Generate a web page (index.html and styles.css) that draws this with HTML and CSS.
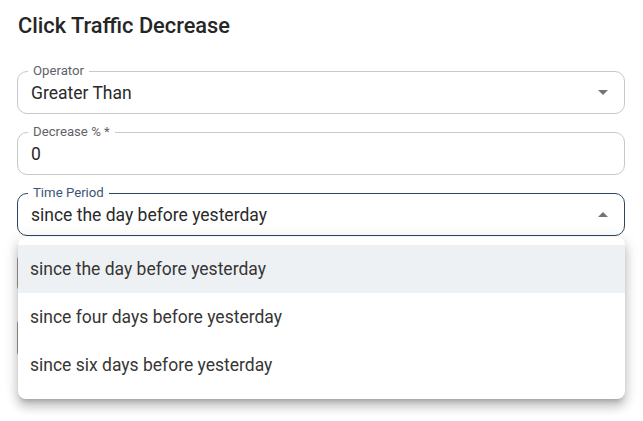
FILE: index.html
```html
<!DOCTYPE html>
<html>
<head>
<meta charset="utf-8">
<link rel="stylesheet" href="styles.css">
</head>
<body>
<div class="panel">
  <h1 class="title">Click Traffic Decrease</h1>
  <div class="form">
    <div class="field">
      <span class="label">Operator</span>
      <span class="value">Greater Than</span>
      <svg class="arrow" width="10" height="5" viewBox="0 0 10 5"><path d="M0 0L5 5L10 0Z" fill="#757575"/></svg>
    </div>
    <div class="field">
      <span class="label">Decrease % *</span>
      <span class="value">0</span>
    </div>
    <div class="field-wrap">
      <div class="field focused">
        <span class="label">Time Period</span>
        <span class="value">since the day before yesterday</span>
        <svg class="arrow" width="10" height="5" viewBox="0 0 10 5"><path d="M0 5L5 0L10 5Z" fill="#757575"/></svg>
      </div>
      <div class="under">
        <div class="under-field"></div>
        <div class="under-btn"></div>
      </div>
      <ul class="menu">
        <li class="item active">since the day before yesterday</li>
        <li class="item">since four days before yesterday</li>
        <li class="item">since six days before yesterday</li>
      </ul>
    </div>
  </div>
</div>
</body>
</html>
```
FILE: styles.css
```css
* { box-sizing: border-box; }
html, body { margin: 0; padding: 0; background: #ffffff; min-height: 421px; }
body {
  font-family: Roboto, "Liberation Sans", sans-serif;
  color: #212121;
}
.panel {
  padding: 12px 18px 0 17px;
  width: 643px;
  min-height: 421px;
}
.title {
  margin: 0 0 0 1px;
  font-size: 21.8px;
  font-weight: 500;
  line-height: 28px;
  color: #262626;
}
.form {
  display: flex;
  flex-direction: column;
  gap: 18px;
  margin-top: 31px;
}
.field {
  position: relative;
  height: 43px;
  border: 1px solid #c8c8c8;
  border-radius: 10px;
  display: flex;
  align-items: center;
  padding: 0 13px;
}
.field.focused {
  border-color: #2c4763;
}
.label {
  position: absolute;
  top: -9px;
  left: 10px;
  padding: 0 5px;
  background: #ffffff;
  font-size: 13.2px;
  line-height: 15px;
  color: #5f6368;
}
.focused .label { color: #3b5576; }
.value {
  font-size: 17.5px;
  line-height: 20px;
  color: #2a2a2a;
  margin-top: 1px;
}
.arrow {
  position: absolute;
  right: 16px;
  top: 18px;
}
.field-wrap {
  position: relative;
}
.under {
  display: flex;
  flex-direction: column;
  gap: 26px;
  margin-top: 18px;
}
.under-field {
  height: 38px;
  border: 1px solid #9a9a9a;
  border-radius: 6px;
}
.under-btn {
  height: 40px;
  border: 1px solid #9a9a9a;
  border-radius: 6px;
}
.menu {
  position: absolute;
  left: 1px;
  right: 0;
  top: 44px;
  margin: 0;
  padding: 8px 0 10px;
  list-style: none;
  background: #ffffff;
  border-radius: 8px;
  box-shadow: 0 5px 5px -3px rgba(0,0,0,0.2), 0 8px 10px 1px rgba(0,0,0,0.14), 0 3px 14px 2px rgba(0,0,0,0.12);
}
.item {
  height: 48px;
  display: flex;
  align-items: center;
  padding: 0 12px;
  font-size: 17.5px;
  color: #363636;
}
.item.active {
  background: #eef1f3;
}
```
